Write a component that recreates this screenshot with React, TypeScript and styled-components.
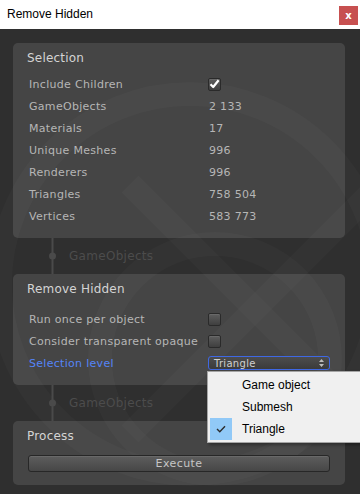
import styled, { createGlobalStyle } from "styled-components";

const GlobalStyle = createGlobalStyle`
  html, body {
    margin: 0;
    padding: 0;
    background: #2f2f2f;
  }
  * {
    box-sizing: border-box;
  }
`;

const Window = styled.div`
  position: relative;
  width: 360px;
  height: 494px;
  overflow: hidden;
  background: #2f2f2f;
  display: flex;
  flex-direction: column;
`;

const TitleBar = styled.div`
  flex: none;
  height: 29px;
  background: #ffffff;
  display: flex;
  align-items: flex-start;
  justify-content: space-between;
  padding: 0 2px 0 7px;
  font-family: "Liberation Sans", Arial, sans-serif;
  font-size: 12px;
  color: #000;
`;

const Title = styled.span`
  line-height: 29px;
`;

const CloseButton = styled.div`
  margin-top: 6px;
  width: 19px;
  height: 19px;
  background: #c75050;
  color: #fff;
  display: flex;
  align-items: center;
  justify-content: center;
  font-family: "DejaVu Sans", sans-serif;
  font-weight: bold;
  font-size: 10px;
  line-height: 1;
`;

const Body = styled.div`
  position: relative;
  flex: 1;
  padding: 14px 15px 0 13px;
  font-family: "DejaVu Sans", Verdana, sans-serif;
`;

const Watermark = styled.svg`
  position: absolute;
  left: 0;
  top: 0;
  pointer-events: none;
`;

const Panel = styled.section<{ $bottom?: number }>`
  position: relative;
  background: rgba(255, 255, 255, 0.11);
  border-radius: 5px;
  padding: 7px 0 ${(p) => p.$bottom ?? 11}px 14px;
`;

const Header = styled.div`
  height: 16px;
  line-height: 16px;
  font-size: 12px;
  letter-spacing: 0.2px;
  color: #d4d4d4;
`;

const Rows = styled.div<{ $gap: number }>`
  margin-top: ${(p) => p.$gap}px;
  padding-left: 2px;
  display: flex;
  flex-direction: column;
`;

const Row = styled.div`
  display: grid;
  grid-template-columns: 180px 1fr;
  align-items: center;
  height: 22px;
  font-size: 11px;
  letter-spacing: 0.3px;
  color: #b6b6b6;
`;

const Label = styled.span<{ $active?: boolean }>`
  color: ${(p) => (p.$active ? "#5584f7" : "#b6b6b6")};
  white-space: nowrap;
`;

const Box = styled.span`
  margin-left: -1px;
  width: 13px;
  height: 13px;
  border-radius: 2px;
  border: 1px solid #2a2a2a;
  background: linear-gradient(#5e5e5e, #3f3f3f);
  box-shadow: inset 0 1px 0 rgba(255, 255, 255, 0.08);
  display: flex;
  align-items: center;
  justify-content: center;
`;

const Dropdown = styled.div`
  margin-left: -1px;
  width: 122px;
  height: 14px;
  border: 1px solid #3f68e4;
  border-radius: 3px;
  background: linear-gradient(#4d4d4d, #3b3b3b);
  display: flex;
  align-items: center;
  justify-content: space-between;
  padding: 0 5px 0 5px;
  font-size: 10px;
  letter-spacing: 0.3px;
  color: #d0d0d0;
`;

const Connector = styled.div`
  position: relative;
  height: 36px;
  display: flex;
  align-items: center;
  gap: 13px;
  padding-left: 36px;
  font-size: 12px;
  letter-spacing: 0.3px;
  color: #4c4c4c;
`;

const ExecuteButton = styled.div`
  margin: 11px 0 0 1px;
  width: 302px;
  height: 17px;
  border: 1px solid #272727;
  border-radius: 3px;
  background: linear-gradient(#5d5d5d, #474747);
  box-shadow: inset 0 1px 0 rgba(255, 255, 255, 0.08);
  display: flex;
  align-items: center;
  justify-content: center;
  font-size: 11px;
  letter-spacing: 0.4px;
  color: #c6c6c6;
`;

const Menu = styled.div`
  position: absolute;
  left: 207px;
  top: 371px;
  width: 156px;
  background: #f0f0f0;
  border: 1px solid #a5a5a5;
  box-shadow: 2px 2px 3px rgba(0, 0, 0, 0.35);
  padding: 2px 0 2px 2px;
  font-family: "Liberation Sans", Arial, sans-serif;
  font-size: 12px;
  color: #000;
`;

const MenuItem = styled.div`
  height: 22px;
  display: flex;
  align-items: center;
  gap: 10px;
`;

const CheckArea = styled.span<{ $on?: boolean }>`
  width: 22px;
  height: 22px;
  background: ${(p) => (p.$on ? "#91c9f7" : "transparent")};
  display: flex;
  align-items: center;
  justify-content: center;
`;

function CheckBox({ checked }: { checked?: boolean }) {
  return (
    <Box>
      {checked && (
        <svg width="11" height="10" viewBox="0 0 11 10">
          <path
            d="M1.5 5.2 L4.2 8 L9.6 1.2"
            fill="none"
            stroke="#ffffff"
            strokeWidth="2.2"
            strokeLinejoin="round"
          />
        </svg>
      )}
    </Box>
  );
}

function Rail() {
  return (
    <svg width="7" height="36" viewBox="0 0 7 36">
      <line x1="3.5" y1="0" x2="3.5" y2="36" stroke="#4a4a4a" strokeWidth="2" />
      <circle cx="3.5" cy="18" r="3.5" fill="#4a4a4a" />
    </svg>
  );
}

const stats: [string, string][] = [
  ["GameObjects", "2 133"],
  ["Materials", "17"],
  ["Unique Meshes", "996"],
  ["Renderers", "996"],
  ["Triangles", "758 504"],
  ["Vertices", "583 773"],
];

const levels = ["Game object", "Submesh", "Triangle"];

export default function App() {
  return (
    <Window>
      <GlobalStyle />
      <TitleBar>
        <Title>Remove Hidden</Title>
        <CloseButton>x</CloseButton>
      </TitleBar>
      <Body>
        <Watermark width="360" height="465" viewBox="0 0 360 465">
          <g fill="none" stroke="#ffffff" strokeOpacity="0.018" strokeWidth="24">
            <circle cx="190" cy="255" r="190" />
            <circle cx="215" cy="330" r="115" />
            <line x1="130" y1="155" x2="380" y2="405" />
            <line x1="385" y1="150" x2="130" y2="405" />
          </g>
        </Watermark>

        <Panel>
          <Header>Selection</Header>
          <Rows $gap={7}>
            <Row>
              <Label>Include Children</Label>
              <CheckBox checked />
            </Row>
            {stats.map(([k, v]) => (
              <Row key={k}>
                <Label>{k}</Label>
                <span>{v}</span>
              </Row>
            ))}
          </Rows>
        </Panel>

        <Connector>
          <Rail />
          GameObjects
        </Connector>

        <Panel>
          <Header>Remove Hidden</Header>
          <Rows $gap={11}>
            <Row>
              <Label>Run once per object</Label>
              <CheckBox />
            </Row>
            <Row>
              <Label>Consider transparent opaque</Label>
              <CheckBox />
            </Row>
            <Row>
              <Label $active>Selection level</Label>
              <Dropdown>
                Triangle
                <svg width="5" height="8" viewBox="0 0 5 8">
                  <path d="M0 3 L2.5 0 L5 3 Z M0 5 L2.5 8 L5 5 Z" fill="#bdbdbd" />
                </svg>
              </Dropdown>
            </Row>
          </Rows>
        </Panel>

        <Connector>
          <Rail />
          GameObjects
        </Connector>

        <Panel $bottom={13}>
          <Header>Process</Header>
          <ExecuteButton>Execute</ExecuteButton>
        </Panel>
      </Body>

      <Menu>
        {levels.map((l) => (
          <MenuItem key={l}>
            <CheckArea $on={l === "Triangle"}>
              {l === "Triangle" && (
                <svg width="10" height="8" viewBox="0 0 10 8">
                  <path
                    d="M1 4 L3.8 6.8 L9 1.2"
                    fill="none"
                    stroke="#2b2b2b"
                    strokeWidth="1.4"
                  />
                </svg>
              )}
            </CheckArea>
            {l}
          </MenuItem>
        ))}
      </Menu>
    </Window>
  );
}
